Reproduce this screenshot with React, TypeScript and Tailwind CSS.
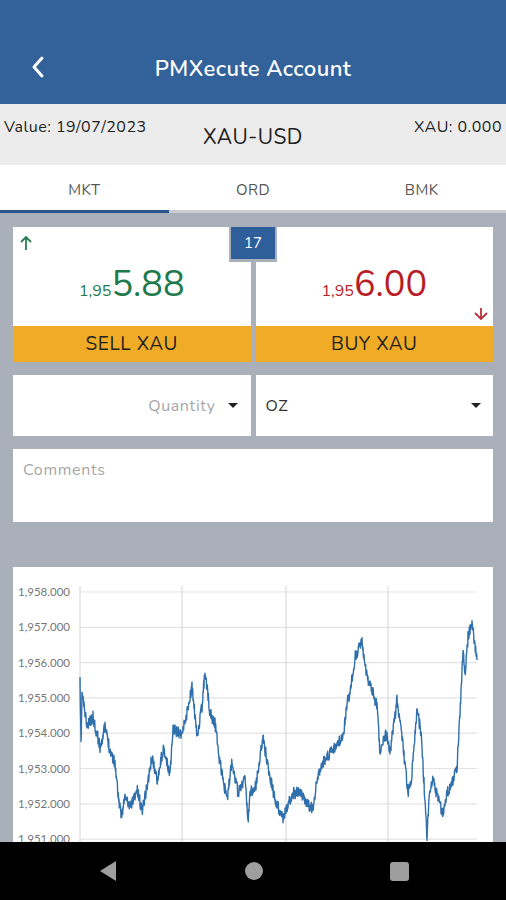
import React from 'react';

const FONT = { fontFamily: '"Nunito", "Lato", "Open Sans", sans-serif' };

// key points of the price line, in chart-card coordinates
const KEYS: [number, number][] = [
  [67, 116], [68, 180], [69, 125], [74, 160], [80, 150], [87, 180], [92, 160], [97, 183],
  [102, 196], [105, 226], [108, 250], [112, 230], [117, 240], [124, 223], [129, 243],
  [134, 220], [139, 190], [144, 213], [150, 183], [157, 206], [160, 163], [169, 166],
  [174, 146], [179, 120], [184, 170], [189, 140], [192, 103], [197, 146], [202, 156],
  [207, 196], [214, 233], [219, 193], [225, 226], [232, 210], [235, 256], [237, 226],
  [243, 218], [250, 170], [255, 200], [262, 233], [270, 250], [280, 226], [287, 226],
  [294, 236], [300, 243], [304, 213], [310, 196], [320, 183], [330, 170], [334, 136],
  [337, 126], [342, 90], [349, 73], [354, 110], [360, 126], [364, 140], [367, 186],
  [373, 166], [377, 186], [384, 133], [389, 170], [395, 226], [398, 216], [404, 143],
  [408, 166], [412, 233], [414, 270], [416, 230], [420, 213], [426, 236], [430, 246],
  [434, 226], [440, 213], [444, 200], [447, 146], [450, 86], [452, 106], [455, 70],
  [459, 55], [462, 80], [464, 93],
];

function buildLine() {
  let seed = 11;
  const rnd = () => {
    seed = (seed * 16807) % 2147483647;
    return seed / 2147483647;
  };
  const pts: string[] = [];
  for (let i = 0; i < KEYS.length - 1; i++) {
    const [x0, y0] = KEYS[i];
    const [x1, y1] = KEYS[i + 1];
    const steps = Math.max(1, Math.round((x1 - x0) * 3));
    for (let s = 0; s < steps; s++) {
      const t = s / steps;
      const x = x0 + (x1 - x0) * t;
      const y = y0 + (y1 - y0) * t + (rnd() - 0.5) * 12;
      pts.push(`${x.toFixed(1)},${y.toFixed(1)}`);
    }
  }
  const last = KEYS[KEYS.length - 1];
  pts.push(`${last[0]},${last[1]}`);
  return pts.join(' ');
}

function Chart() {
  const levels = [1958, 1957, 1956, 1955, 1954, 1953, 1952, 1951];
  const yOf = (v: number) => 25 + (1958 - v) * 35.3;
  return (
    <svg width="481" height="290" viewBox="0 0 481 290" className="block">
      {levels.map((v) => (
        <g key={v}>
          <line x1="67" x2="464" y1={yOf(v)} y2={yOf(v)} stroke="#e3e3e3" strokeWidth="1.2" />
          <text x="5" y={yOf(v) + 4} fontSize="11.5" fill="#777" fontFamily="Lato, sans-serif">
            {v.toLocaleString('en-US')}.000
          </text>
        </g>
      ))}
      {[67, 169, 273, 375].map((x) => (
        <line key={x} x1={x} x2={x} y1="19" y2="290" stroke="#dadada" strokeWidth="1.2" />
      ))}
      <polyline points={buildLine()} fill="none" stroke="#2f6fab" strokeWidth="1.4" strokeLinejoin="round" />
    </svg>
  );
}

function Caret() {
  return (
    <svg width="10" height="6" viewBox="0 0 10 6">
      <path d="M0 0 H10 L5 5 Z" fill="#222" />
    </svg>
  );
}

export default function App() {
  return (
    <div className="w-[506px] h-[900px] flex flex-col bg-[#a9b0b9] overflow-hidden" style={FONT}>
      {/* app bar */}
      <div className="h-[104px] bg-[#336199] flex items-end pb-[24px] relative shrink-0">
        <svg width="16" height="24" viewBox="0 0 16 24" className="absolute left-[30px] top-[55px]">
          <path d="M12 3 L4 12 L12 21" stroke="white" strokeWidth="3" fill="none" strokeLinecap="round" strokeLinejoin="round" />
        </svg>
        <div className="w-full text-center text-white text-[22px] tracking-[0.02em] font-semibold leading-none">PMXecute Account</div>
      </div>

      {/* value bar */}
      <div className="h-[61px] bg-[#ececec] grid grid-cols-[1fr_auto_1fr] px-[4px] shrink-0 text-[#222] tracking-[0.03em]">
        <div className="text-[16px] pt-[11px]">Value: 19/07/2023</div>
        <div className="text-[21px] pt-[18px]">XAU-USD</div>
        <div className="text-[16px] pt-[11px] text-right">XAU: 0.000</div>
      </div>

      {/* tabs */}
      <div className="h-[48px] bg-white flex shrink-0 text-[15px] text-[#555] tracking-[0.03em]">
        <div className="flex-1 flex items-center justify-center border-b-[3px] border-[#2c5589] pt-[5px]">MKT</div>
        <div className="flex-1 flex items-center justify-center border-b-[3px] border-[#c9ccd1] pt-[5px]">ORD</div>
        <div className="flex-1 flex items-center justify-center border-b-[3px] border-[#c9ccd1] pt-[5px]">BMK</div>
      </div>

      <div className="flex-1 overflow-hidden px-[13px] pt-[14px] flex flex-col">
        {/* price cards */}
        <div className="relative grid grid-cols-2 gap-[5px] h-[135px] shrink-0">
          <div className="flex flex-col bg-white">
            <div className="flex-1 relative flex items-center justify-center pt-[16px]">
              <svg width="14" height="16" viewBox="0 0 14 16" className="absolute left-[6px] top-[8px]">
                <path d="M7 15 V2 M2 7 L7 2 L12 7" stroke="#2a7d55" strokeWidth="1.8" fill="none" />
              </svg>
              <span className="text-[#1e7a4a] text-[16px] self-center mt-[12px]">1,95</span>
              <span className="text-[#1e7a4a] text-[36px] leading-none">5.88</span>
            </div>
            <div className="h-[36px] bg-[#f1ac27] flex items-center justify-center text-[19px] tracking-[0.03em] text-[#222]">SELL XAU</div>
          </div>
          <div className="flex flex-col bg-white">
            <div className="flex-1 relative flex items-center justify-center pt-[16px]">
              <span className="text-[#b81c25] text-[16px] self-center mt-[12px]">1,95</span>
              <span className="text-[#b81c25] text-[36px] leading-none">6.00</span>
              <svg width="16" height="14" viewBox="0 0 16 14" className="absolute right-[4px] bottom-[5px]">
                <path d="M8 1 V12 M2 6 L8 12 L14 6" stroke="#b8323a" strokeWidth="1.8" fill="none" />
              </svg>
            </div>
            <div className="h-[36px] bg-[#f1ac27] flex items-center justify-center text-[19px] tracking-[0.03em] text-[#222]">BUY XAU</div>
          </div>
          <div className="absolute left-[216px] top-0 w-[48px] h-[35px] bg-[#a9b0b9] px-[2px] pb-[3px]">
            <div className="w-full h-full bg-[#2f5f9a] text-white text-[15px] flex items-center justify-center">17</div>
          </div>
        </div>

        {/* quantity / unit */}
        <div className="grid grid-cols-2 gap-[5px] h-[61px] mt-[13px] shrink-0 text-[16px] tracking-[0.04em]">
          <div className="bg-white flex items-center justify-end gap-[12px] pr-[13px]">
            <span className="text-[#a6a6a6]">Quantity</span>
            <Caret />
          </div>
          <div className="bg-white flex items-center justify-between pl-[10px] pr-[12px]">
            <span className="text-[#333]">OZ</span>
            <Caret />
          </div>
        </div>

        {/* comments */}
        <div className="bg-white h-[73px] mt-[13px] shrink-0 px-[10px] pt-[9px] text-[16px] tracking-[0.04em] text-[#a6a6a6]">Comments</div>

        {/* chart */}
        <div className="bg-white mt-[45px] shrink-0">
          <Chart />
        </div>
      </div>

      {/* system nav */}
      <div className="h-[58px] bg-black flex items-center justify-center gap-[127px] shrink-0">
        <svg width="20" height="22" viewBox="0 0 20 22">
          <path d="M18 1 L2 11 L18 21 Z" fill="#9e9e9e" />
        </svg>
        <div className="w-[18px] h-[18px] rounded-full bg-[#9e9e9e]" />
        <div className="w-[19px] h-[19px] rounded-[3px] bg-[#9e9e9e]" />
      </div>
    </div>
  );
}
